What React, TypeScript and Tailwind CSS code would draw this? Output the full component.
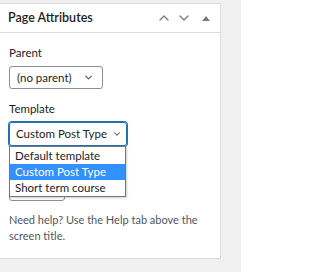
import { ChevronDown, ChevronUp } from 'lucide-react';

const font = { fontFamily: 'Lato, "Noto Sans", sans-serif' };

// WordPress "Page Attributes" meta box with the template select opened.
export default function App() {
	return (
		<div className="h-[272px] w-[241px] overflow-hidden bg-[#f0f0f1] pt-[3px] text-[#1d2327]" style={font}>
			<div className="w-[221px] border border-l-0 border-[#dcdcde] bg-white">
				<div className="flex h-[29px] items-center border-b border-[#dcdcde] pl-[8px] pr-[10px]">
					<h2 className="flex-1 text-[12.5px] font-semibold">Page Attributes</h2>
					<ChevronUp className="h-[16px] w-[16px] text-[#787c82]" strokeWidth={2} />
					<ChevronDown className="ml-[4px] h-[16px] w-[16px] text-[#787c82]" strokeWidth={2} />
					<span className="ml-[10px] h-0 w-0 border-x-[4px] border-b-[5px] border-x-transparent border-b-[#787c82]" />
				</div>
				<div className="pb-[14px] pl-[9px] pr-[4px] pt-[12px] text-[11.5px]">
					<p className="leading-[16px]">Parent</p>
					<div className="mt-[5px] flex h-[23px] w-[94px] items-center rounded-[3px] border border-[#8c8f94] pl-[7px] pr-[8px]">
						<span className="flex-1">(no parent)</span>
						<ChevronDown className="h-[11px] w-[11px] text-[#50575e]" strokeWidth={2.5} />
					</div>
					<p className="mt-[12px] leading-[16px]">Template</p>
					<div className="relative mt-[5px]">
						<div className="flex h-[24px] w-[118px] items-center gap-[3px] rounded-[3px] border border-[#2271b1] pl-[6px] pr-[4px] text-[11.5px] shadow-[0_0_0_1px_#2271b1]">
							<span className="flex-1 whitespace-nowrap">Custom Post Type</span>
							<ChevronDown className="h-[10px] w-[10px] shrink-0 text-[#50575e]" strokeWidth={2.5} />
						</div>
						<div className="mt-[25px] h-[30px] w-[56px] rounded-[3px] border border-[#8c8f94]" />
						<ul className="absolute left-0 top-[24px] w-[117px] border border-[#767676] bg-white text-[11.5px] leading-[16px] shadow-[1px_1px_2px_rgba(0,0,0,0.2)]">
							<li className="pl-[5px] pt-[1px]">Default template</li>
							<li className="bg-[#3390ff] pl-[5px] text-white">Custom Post Type</li>
							<li className="pl-[5px]">Short term course</li>
						</ul>
					</div>
					<p className="mt-[11px] whitespace-nowrap text-[11px] leading-[16px] text-[#50575e]">
						Need help? Use the Help tab above the
						<br />
						screen title.
					</p>
				</div>
			</div>
			<div className="mt-[16px] h-[20px] w-[221px] border border-l-0 border-[#dcdcde] bg-white" />
		</div>
	);
}
